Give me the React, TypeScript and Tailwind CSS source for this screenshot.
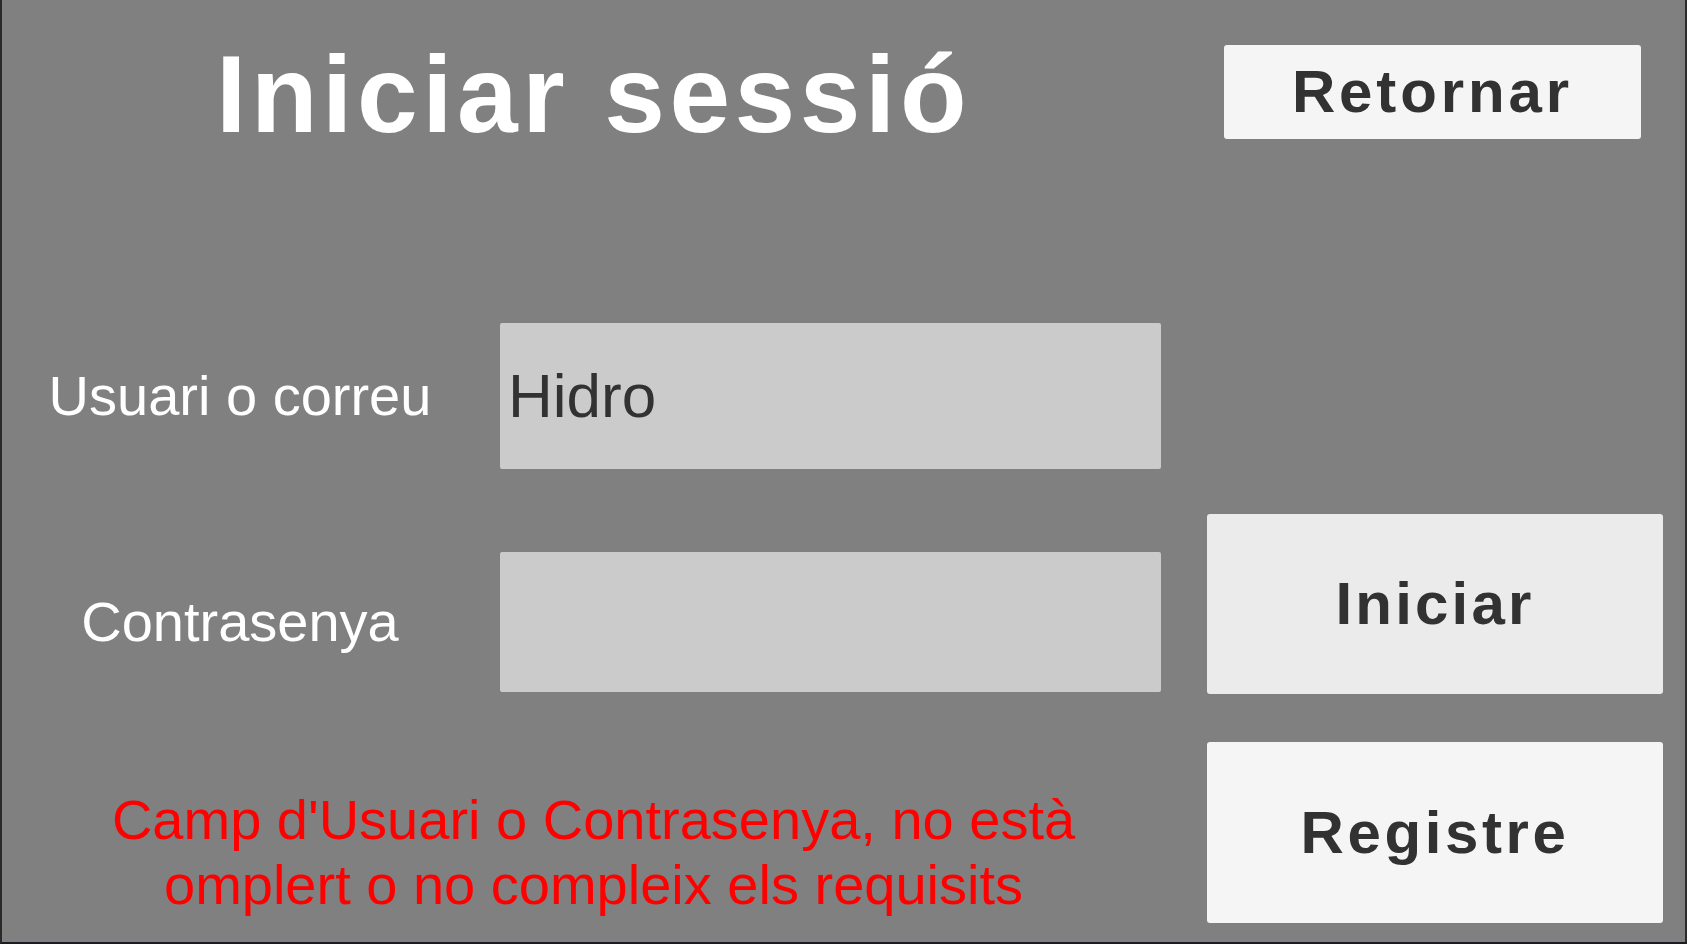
import type { ReactNode } from 'react'

const FONT = '[font-family:"Liberation_Sans",Arial,sans-serif]'

function PanelButton({ children, className }: { children: ReactNode; className: string }) {
  return (
    <button
      type="button"
      className={`flex items-center justify-center rounded-[3px] text-[60px] font-bold leading-none text-[#323232] ${className}`}
    >
      {children}
    </button>
  )
}

function Field({ label, value, height }: { label: string; value?: string; height: string }) {
  return (
    <div className="flex items-center">
      <span className="w-[476px] text-center text-[56px] leading-none text-white">{label}</span>
      <div className={`ml-[22px] flex w-[661px] items-center rounded-[2px] bg-[#cbcbcb] pl-[8px] ${height}`}>
        <span className="text-[62px] leading-none text-[#323232]">{value}</span>
      </div>
    </div>
  )
}

export default function App() {
  return (
    <div
      className={`flex h-[944px] w-full flex-col overflow-hidden border-r-2 border-b-2 border-l-2 border-r-[#2a2a2a] border-b-[#1c1c22] border-l-[#2a2a2a] bg-[#808080] ${FONT}`}
    >
      {/* header */}
      <div className="flex items-start pt-[40px]">
        <h1 className="ml-[214px] text-[109px] font-bold leading-none tracking-[4.6px] text-white">Iniciar sessió</h1>
        <PanelButton className="mt-[5px] mr-[44px] ml-auto h-[94px] w-[417px] bg-[#f5f5f5] tracking-[3.9px]">
          Retornar
        </PanelButton>
      </div>

      <div className="flex items-start">
        {/* form */}
        <div className="flex w-[1159px] flex-col">
          <div className="mt-[174px]">
            <Field label="Usuari o correu" value="Hidro" height="h-[146px]" />
          </div>
          <div className="mt-[83px]">
            <Field label="Contrasenya" height="h-[140px]" />
          </div>
          <p className="mt-[95px] pl-[24px] text-center text-[56px] leading-[65px] text-[#ff0000]">
            Camp d'Usuari o Contrasenya, no està
            <br />
            omplert o no compleix els requisits
          </p>
        </div>

        {/* actions */}
        <div className="ml-[46px] flex w-[456px] flex-col">
          <PanelButton className="mt-[365px] h-[180px] w-full bg-[#ebebeb] tracking-[3.2px]">Iniciar</PanelButton>
          <PanelButton className="mt-[48px] h-[181px] w-full bg-[#f5f5f5] tracking-[3.6px]">Registre</PanelButton>
        </div>
      </div>
    </div>
  )
}
